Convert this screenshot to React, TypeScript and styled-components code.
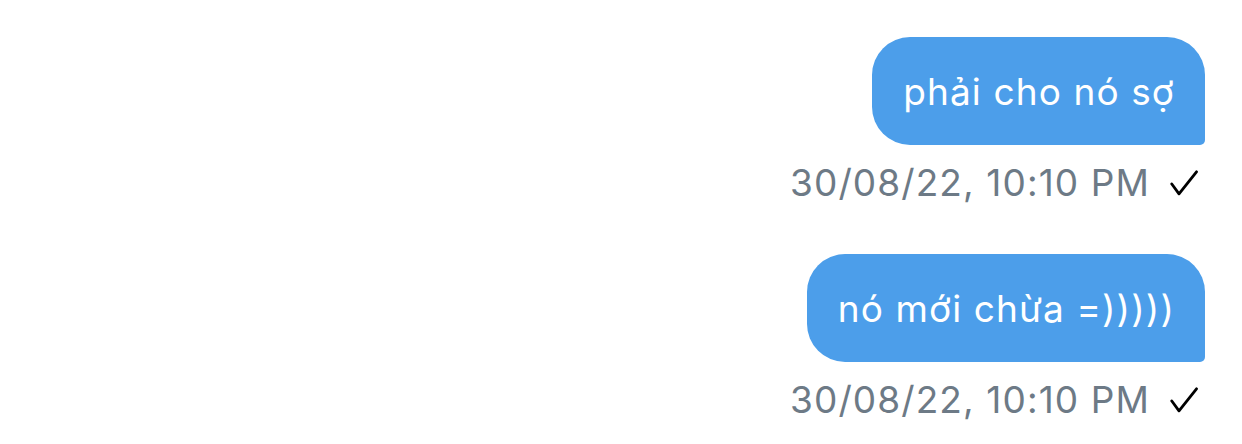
import React from "react";
import styled, { createGlobalStyle } from "styled-components";

const Global = createGlobalStyle`
  html, body { margin: 0; padding: 0; background: #ffffff; overflow: hidden; }
  body { font-family: Inter, "Noto Sans", sans-serif; }
`;

const Thread = styled.div`
  display: flex;
  flex-direction: column;
  align-items: flex-end;
  gap: 49px;
  padding: 37px 37px 0 0;
`;

const Group = styled.div`
  display: flex;
  flex-direction: column;
  align-items: flex-end;
`;

const Bubble = styled.div`
  height: 108px;
  box-sizing: border-box;
  display: flex;
  align-items: center;
  padding: 0 30px 0 31px;
  background: #4c9eea;
  color: #ffffff;
  font-size: 37px;
  letter-spacing: 1.1px;
  border-radius: 38px 38px 5px 38px;
  white-space: nowrap;
`;

const Meta = styled.div`
  display: flex;
  align-items: center;
  gap: 20px;
  margin-top: 16px;
  margin-right: 7px;
  height: 44px;
  line-height: 44px;
  font-size: 37px;
  letter-spacing: 1.1px;
  color: #6d7a86;
  white-space: nowrap;
`;

const Check = () => (
  <svg width="28" height="26" viewBox="0 0 28 26" fill="none">
    <polyline
      points="1.8,14 9,23.8 26.5,1.8"
      stroke="#000"
      strokeWidth="2.8"
      strokeLinecap="round"
      strokeLinejoin="round"
    />
  </svg>
);

const messages = [
  { text: "phải cho nó sợ", time: "30/08/22, 10:10 PM" },
  { text: "nó mới chừa =)))))", time: "30/08/22, 10:10 PM" },
];

export default function App() {
  return (
    <>
      <Global />
      <Thread>
        {messages.map((m, i) => (
          <Group key={i}>
            <Bubble>{m.text}</Bubble>
            <Meta>
              <span>{m.time}</span>
              <Check />
            </Meta>
          </Group>
        ))}
      </Thread>
    </>
  );
}
